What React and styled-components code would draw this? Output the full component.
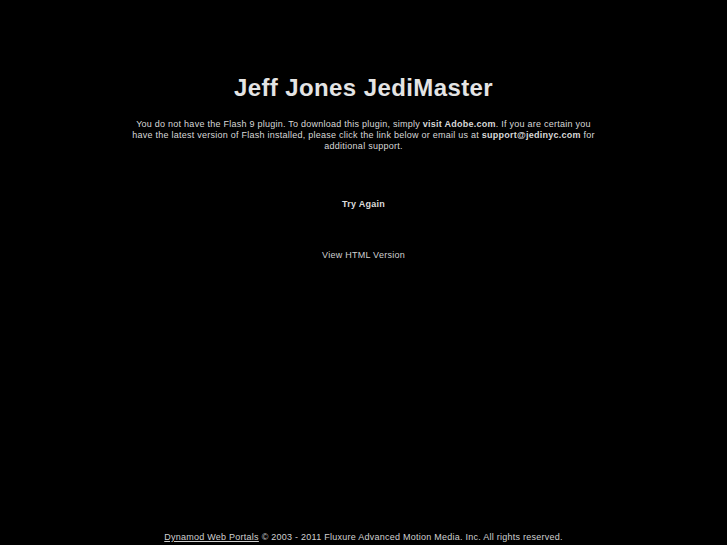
import React from "react";
import styled, { createGlobalStyle } from "styled-components";

const Global = createGlobalStyle`
  html, body {
    margin: 0;
    padding: 0;
    background: #000;
  }
  body {
    font-family: "Liberation Sans", Arial, Helvetica, sans-serif;
    color: #dcdcdc;
  }
`;

function App() {
  return (
    <>
      <Global />
      <Page>
        <Content>
          <Title>Jeff Jones JediMaster</Title>
          <Message>
            You do not have the Flash 9 plugin. To download this plugin, simply{" "}
            <b>visit Adobe.com</b>. If you are certain you have the latest version
            of Flash installed, please click the link below or email us at{" "}
            <b>support@jedinyc.com</b> for additional support.
          </Message>
          <TryAgain>Try Again</TryAgain>
          <HtmlLink>View HTML Version</HtmlLink>
        </Content>
        <Footer>
          <FooterLink>Dynamod Web Portals</FooterLink> © 2003 - 2011 Fluxure
          Advanced Motion Media. Inc. All rights reserved.
        </Footer>
      </Page>
    </>
  );
}

export default App;

const Page = styled.div`
  min-height: 545px;
  height: 100vh;
  display: flex;
  flex-direction: column;
  align-items: center;
  box-sizing: border-box;
`;
const Content = styled.div`
  width: 467px;
  flex: 1;
  display: flex;
  flex-direction: column;
  align-items: center;
  text-align: center;
  padding-top: 72px;
`;
const Title = styled.h1`
  margin: 0;
  font-size: 24px;
  line-height: 32px;
  font-weight: bold;
  letter-spacing: 0.4px;
  color: #e4e4e4;
`;
const Message = styled.p`
  margin: 15px 0 0;
  font-size: 9px;
  line-height: 11px;
  letter-spacing: 0.25px;
  color: #d8d8d8;
  b {
    font-weight: bold;
  }
`;
const TryAgain = styled.div`
  margin-top: 47px;
  font-size: 9px;
  line-height: 11px;
  font-weight: bold;
  letter-spacing: 0.25px;
  color: #dcdcdc;
  cursor: pointer;
`;
const HtmlLink = styled.div`
  margin-top: 40px;
  font-size: 9px;
  line-height: 11px;
  letter-spacing: 0.25px;
  color: #d0d0d0;
  cursor: pointer;
`;
const Footer = styled.div`
  font-size: 9px;
  line-height: 11px;
  letter-spacing: 0.25px;
  color: #d0d0d0;
  padding-bottom: 2px;
  text-align: center;
`;
const FooterLink = styled.span`
  text-decoration: underline;
`;
